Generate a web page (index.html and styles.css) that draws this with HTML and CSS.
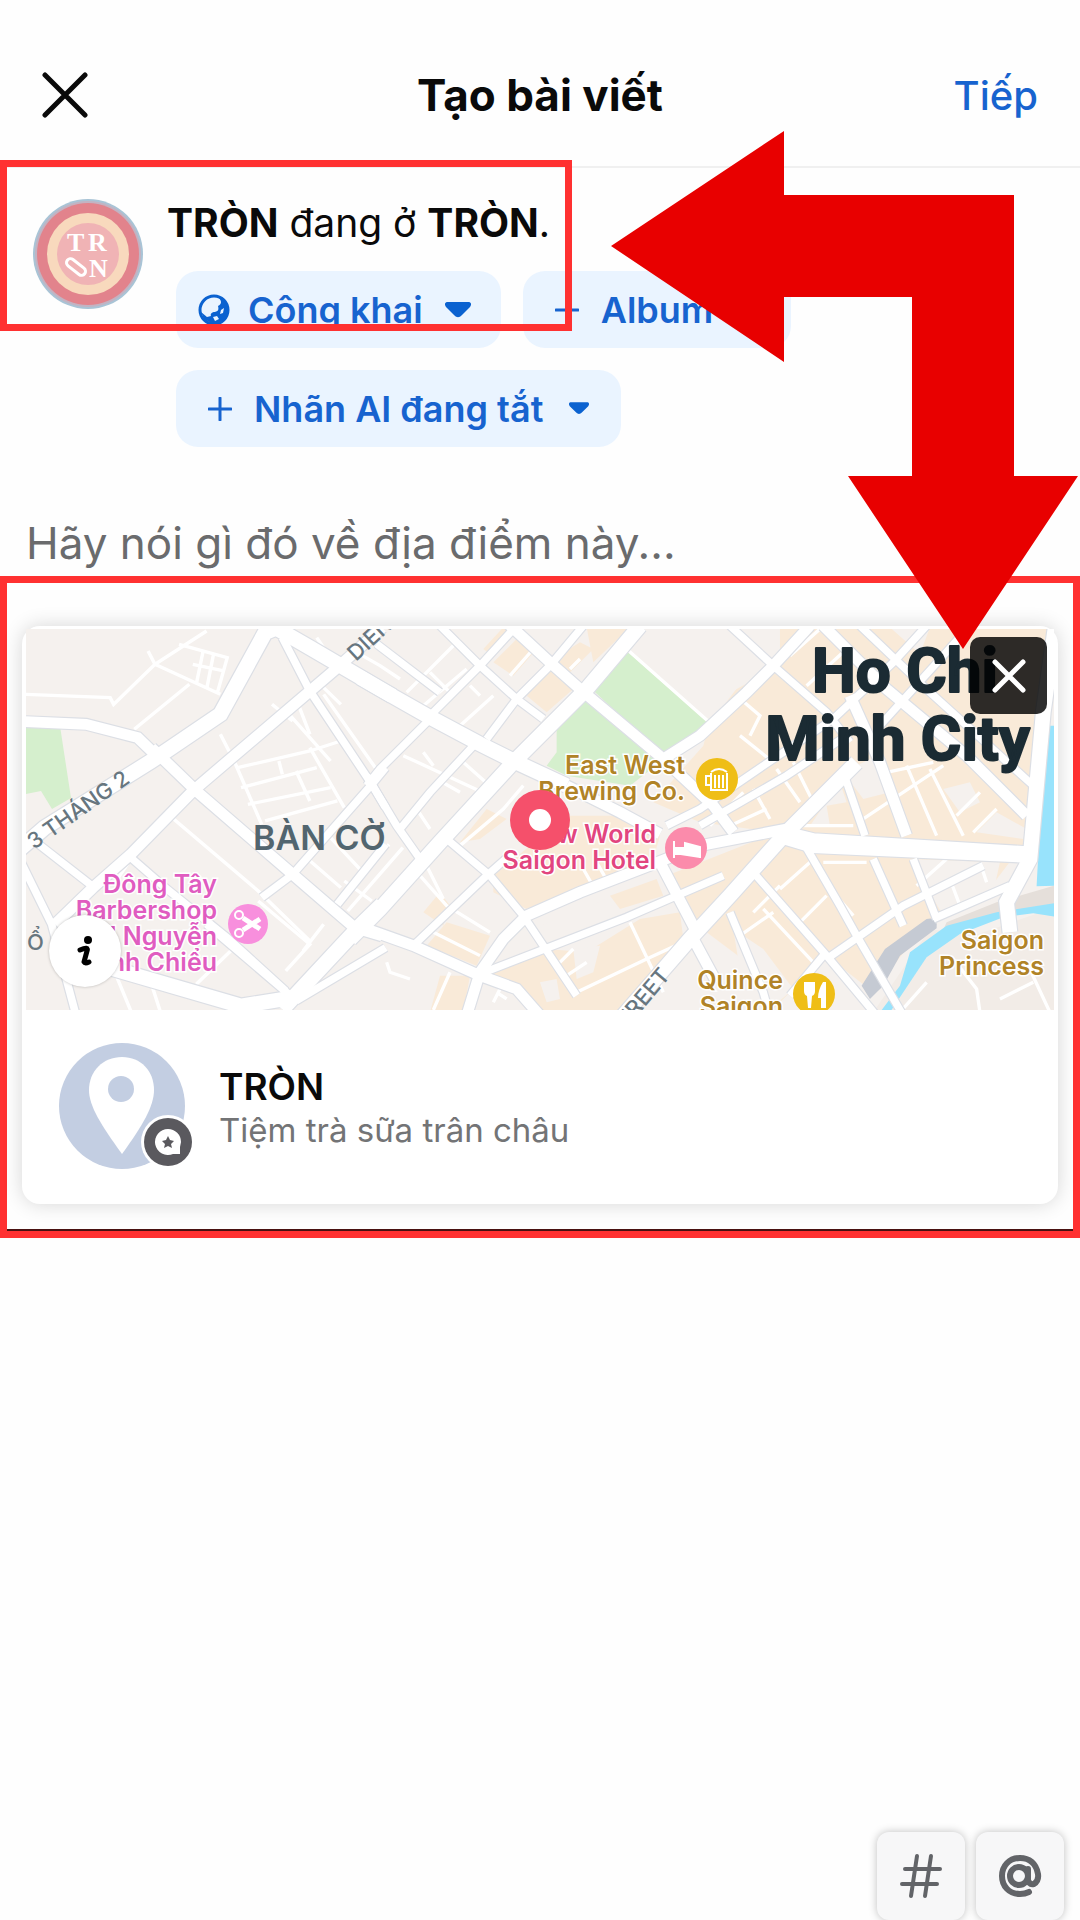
FILE: index.html
```html
<!DOCTYPE html>
<html lang="vi">
<head>
<meta charset="utf-8">
<meta name="viewport" content="width=device-width, initial-scale=1">
<title>Tạo bài viết</title>
<link rel="stylesheet" href="styles.css">
</head>
<body>
<div class="page">
  <header class="topbar">
    <button class="icon-button" type="button" aria-label="Đóng">
      <svg width="46" height="46" viewBox="0 0 46 46"><path d="M3 3 43 43M43 3 3 43" fill="none" stroke="#0a0a0a" stroke-width="5" stroke-linecap="round"/></svg>
    </button>
    <h1 class="title">Tạo bài viết</h1>
    <a class="next" href="#">Tiếp</a>
  </header>

  <main class="composer">
    <section class="author">
      <svg class="avatar" viewBox="0 0 110 110" role="img" aria-label="TRÒN">
        <circle cx="55" cy="55" r="55" fill="#a9c4d6"/>
        <circle cx="55" cy="55" r="53" fill="#c3b3c2"/>
        <circle cx="55" cy="55" r="51" fill="#e2838c"/>
        <circle cx="55" cy="55" r="41" fill="#f8d9bd"/>
        <circle cx="55" cy="55" r="31" fill="#f0b3b5"/>
        <g class="avatar-text"><text x="34" y="52">T</text><text x="55" y="52">R</text><text x="56" y="78">N</text></g>
        <rect x="32" y="64" width="22" height="8" rx="4" transform="rotate(38 43 68)" fill="#f0b3b5" stroke="#fff" stroke-width="3"/>
      </svg>
      <div class="author-info">
        <p class="status"><b>TRÒN</b> đang ở <b>TRÒN</b>.</p>
        <div class="chips">
          <button class="chip chip-public" type="button">
            <svg width="32" height="32" viewBox="0 0 32 32"><circle cx="16" cy="16" r="14" fill="none" stroke="#0b62d0" stroke-width="3"/><path d="M20 3c4 4 4 7 0 9 1 4 0 5-3 6-3 0-5 2-4 4l-4 1-6-5 3 7 9 5 8-1 6-7 1-8-4-8z" fill="#0b62d0"/><path d="m15 23 4-1 2 3-4 2zM22 20l1-4 3-2-1 5z" fill="#eaf4ff"/></svg>
            <span>Công khai</span>
            <svg width="26" height="16" viewBox="0 0 26 16"><path d="M3 0h20c3 0 4 2 2 5l-8 8c-3 3-5 3-8 0L1 5C-1 2 0 0 3 0z" fill="#0b62d0"/></svg>
          </button>
          <button class="chip" type="button">
            <svg width="24" height="24" viewBox="0 0 24 24"><path d="M12 1v22M1 12h22" stroke="#1763cf" stroke-width="3" stroke-linecap="round"/></svg>
            <span>Album</span>
            <svg width="20" height="13" viewBox="0 0 26 16"><path d="M3 0h20c3 0 4 2 2 5l-8 8c-3 3-5 3-8 0L1 5C-1 2 0 0 3 0z" fill="#0b62d0"/></svg>
          </button>
          <button class="chip" type="button">
            <svg width="24" height="24" viewBox="0 0 24 24"><path d="M12 1v22M1 12h22" stroke="#1763cf" stroke-width="3" stroke-linecap="round"/></svg>
            <span>Nhãn AI đang tắt</span>
            <svg width="20" height="13" viewBox="0 0 26 16"><path d="M3 0h20c3 0 4 2 2 5l-8 8c-3 3-5 3-8 0L1 5C-1 2 0 0 3 0z" fill="#0b62d0"/></svg>
          </button>
        </div>
      </div>
    </section>

    <input class="message" type="text" aria-label="Nội dung bài viết" placeholder="Hãy nói gì đó về địa điểm này...">

    <section class="attachment">
      <article class="card">
        <div class="map-wrap">
          <svg class="map" viewBox="26 628 1028 381" role="img" aria-label="Bản đồ">
            <defs>
              <g id="roads-west" transform="matrix(.3443 0 0 .3333 0 560)">
                <path class="wide" d="M40 880 130 800 440 600 640 460 770 215 830 190M800 200 900 260 1140 405M820 1345 1050 1090 1110 1030M300 1215 700 1335 850 1310"/>
                <path class="mid" d="M440 560 570 690 850 940 1030 1100 1110 1125M1110 200 980 320 560 690 380 880 270 980 160 1090M75 482 250 490 400 530 450 580"/>
                <path class="small" d="M820 230 900 390 1080 670 1120 740M1120 620 1080 670 850 940 760 1010M50 880 150 1090 220 1360M100 840 280 985M1120 850 980 1030M860 1320 1120 1160M850 1310 600 1090M380 890 480 980 660 1130 830 1290"/>
              </g>
              <g id="roads-east" transform="translate(380 628) scale(.3333)">
                <path class="wide" d="M-60 145 0 180 150 265 300 345 420 405 560 470M780-10 620 180 400 400 180 640 0 840-90 930M1430 400 1220 610 1050 800 930 930 730 1160M1200 610 1300 635 1960 675M1215 625 1300 650 1960 680M2025 0 1990 250 1950 690 1880 820 1890 910"/>
                <path class="mid" d="M560 470 720 550 840 615M-40 900 100 950 300 1040 410 1080 480 1160M1220 600 960 650 820 705 600 790 440 860 370 930 300 1030 260 1160M380-20 510 100 600 180 850 390 1000 530 1060 610M850 390 960 320 1100 190 1180 110 1290-10M1330-10 1520 180 1760 380 1940 560M840 700 950 910M1410 200 1500 400 1580 620M940 930 1010 1060"/>
                <path class="small" d="M300 1035 740 865 1030 740M200 630 330 740 430 860 590 1100M100 950 320 740 400 670M60 600 150 490 290 340M-40 440 50 590 120 690M140 280 0 420-40 470M-10 45 180 190M160 250 300 110 410-10M320 330 410 210 510 110 610-10M180-10 300 110 410 210 490 270M1050-10 1180 110 1340 250 1410 340M860 590 960 540 1180 390 1360 270 1540 100 1640-10M960 590 1220 440 1400 320M1390 430 1455 620M1270 640 1380 830 1430 920 1570 1160M1480 690 1570 890M1600 690 1670 870M1120 730 1340 980 1490 1160M1050 850 1150 1090 1170 1160M1340 990 1570 830 1810 710M1660 870 1890 770M1330 980 1230 1100M1440-10 1650 190 1960 470M1500 290 1690 80 1770-10"/>
              </g>
            </defs>
            <rect x="26" y="628" width="1028" height="381" fill="#f5f1ee"/>
            <g transform="translate(380 628) scale(.3333)">
              <path fill="#f9ead8" d="M340 100 410 30 470 60 400 140zM440 200 510 120 580 180 500 250zM520 90 600 40 640 60 560 140zM620-5h130L640 100zM310 60l60-65h30l-70 80zM140 950 200 880 330 920 290 1010zM130 850l50-60 30 40-20 60zM180 1040 270 1040 250 1150H150zM340 740 560 560 740 560 840 620 820 690 600 780 440 840 340 790zM690 800 830 750 850 800 720 840zM320 1040 500 960 620 970 780 870 900 850 910 930 720 1150H470l-70-80zM320 540l60 30-80 60-60 10z"/>
              <path fill="#f9ead8" d="M820 520 970 350 1000 240 1070 180 1200 110 1180-5H2020L1950 620 1820 790 1640 880 1480 1090 1340 980 1170 1150 1100 1000 940 880 860 740 1190 610 960 580z"/>
              <path fill="#f5f1ee" d="M760-5h440v100l-120 70-90 120-230-220zM1290 590 1380 460 1400 520 1340 530 1350 590zM1390 430 1490 380 1530 490 1450 510zM1790 610 1850 550 1940 600 1930 630zM1590 690 1860 700 1840 790 1690 860zM1060 900 1150 960 1240 1080 1160 1150 1100 1150zM1690 480l80-20 30 60-60 30zM1530-5h120l-30 80zM980 600l70 10-90 30zM580 960l80-10-20 80-50 20zM480 1060l50-10 10 60-40 10zM480 890l200-80 30 40-180 90z"/>
              <path fill="#d5efcd" d="M635 180 740 65 995 290 900 370 850 380zM500 410 530 370 530 300 615 205 840 400 750 470 560 440z"/>
              <path fill="#f2ece7" d="M1650 900 1780 920 2040 830V1150H1480z"/>
              <path fill="#e5dfda" d="M1700 880 1850 820 2040 765v70l-180 30-180 60z"/>
              <path fill="#98e3fc" d="M1500 1150 1560 1070 1590 970 1700 890 1850 850 2040 820v45l-80-12-90 12-130 50-100 70-60 90-50 75zM2005 290h35v480l-70 2 20-380zM2010 130l30-20v75l-20 5z"/>
              <path fill="#c5cad3" d="M1445 1070 1515 960 1640 870q35-8 30 28L1560 980l-50 90-40 40z"/>
            </g>
            <path fill="#d5efcd" d="M26 725h34l11 72-19 11-11-18-15 3z"/>
            <g class="lanes" transform="matrix(.3443 0 0 .3333 0 560)">
              <path d="M75 400 320 410 330 430 450 310 600 210M430 270 450 310 640 400M520 250 660 290 630 400M590 270 570 370M620 280 600 385M560 310 650 330M390 505 550 370M500 770 750 990 900 1140M680 600 760 790M690 620 900 570 990 540M700 680 920 620M720 730 960 680M770 780 980 720M840 460 960 600M870 440 900 520M900 560 1000 740M860 630 900 720M810 600 820 640"/>
              <path d="M640 520 680 600M940 400 1090 620M940 380 990 430M790 430 850 480M890 890 990 980M960 830 1050 930M1170 860 1010 1050M1130 850 970 1030M750 1020 900 1150 830 1230M940 1090 880 1170M340 1250 380 1350M440 1270 465 1350M690 1150 570 1270M370 910 330 970M1000 960 1080 1020M920 230 960 290"/>
            </g>
            <g class="lanes" transform="translate(380 628) scale(.3333)">
              <path d="M-70 70 0 110 60 150M80 190 240 30M130 230 260 120M390 140 460 60M240 290 340 200M70 380 200 440 330 500M130 370 160 410M170 450 240 490M110 540 150 600M250 400 340 480M240 650 370 540 430 470M120 740 200 830 330 910M130 690 190 810M160 910 300 980M210 1030 160 1143M610 720 650 790M650 700 690 770M750 880 850 1090M590 1090 800 990 930 930M530 1010 580 960M20 1000 30 1030 90 1050M350 1090 380 1110M740 60 1000 290M570 120 600 90M560 1040 620 1000M340 1120 360 1080M150 130 210 190M270 170 300 200"/>
              <path d="M1070 200 1140 260 1110 320M1120 480 1170 570M1190 420 1260 520M1050 590 1160 540M1270 590 1420 590M1450 570 1690 410M1520 430 1660 400M1580 410 1670 620M1650 420 1750 620M1730 560 1800 490M1780 610 1850 540M1330 700 1460 700M1200 780 1290 700M1260 880 1340 800M1360 790 1420 860M1150 840 1300 1000M1120 850 1200 770M1080 920 1180 850M1610 770 1700 690M1710 750 1740 830M1800 700 1820 760M1720 990 1790 1080 1800 1150M1940 1000 2010 1150M1640 1060 1560 1150M1860 1110 1960 1060M1230 80 1320 0M1280 170 1400 60M1240 400 1300 520M1080 320 1180 400M1090 490 990 590"/>
            </g>
            <use href="#roads-west" class="casing"/>
            <use href="#roads-east" class="casing"/>
            <use href="#roads-west" class="surface"/>
            <use href="#roads-east" class="surface"/>
            <g class="street-label">
              <text transform="translate(34 849) rotate(-35)">3 THÁNG 2</text>
              <text transform="translate(356 661) rotate(-43)">DIEN</text>
              <text transform="translate(671 975) rotate(-50)" text-anchor="end">STREET</text>
              <text x="27" y="949">Ổ</text>
            </g>
            <text class="district" x="253" y="849">BÀN CỜ</text>
            <g class="city"><text x="812" y="691">Ho Chi</text><text x="1030" y="759" text-anchor="end">Minh City</text></g>
            <g class="poi food">
              <text x="685" y="773">East West</text><text x="685" y="799">Brewing Co.</text>
              <text x="783" y="988">Quince</text><text x="783" y="1014">Saigon</text>
              <text x="1044" y="948">Saigon</text><text x="1044" y="974">Princess</text>
            </g>
            <g class="poi hotel"><text x="656" y="842">New World</text><text x="656" y="868">Saigon Hotel</text></g>
            <g class="poi salon">
              <text x="217" y="892">Đông Tây</text><text x="217" y="918">Barbershop</text><text x="217" y="944">1 Nguyễn</text><text x="217" y="970">Đình Chiểu</text>
            </g>
            <circle cx="717" cy="778" r="21" fill="#efbe16"/>
            <path d="M711 772v17h16v-17M711 775h-5v9h5M711 771q8-6 16 0M715 774v13M719 774v13M723 774v13" fill="none" stroke="#fff" stroke-width="2"/>
            <circle cx="814" cy="993" r="21" fill="#efbe16"/>
            <path d="M804 981v9q0 4 3 5l1 12h3l1-12q3-1 3-5v-9zM823 981q-5 8-5 16h3v10h5v-26z" fill="#fff"/>
            <circle cx="686" cy="847" r="21" fill="#fb8bab"/>
            <path d="M674 840v17M674 853h26v4M700 853v-7l-15-4v5h-9v6" fill="#fff" stroke="#fff" stroke-width="2"/>
            <circle cx="248" cy="923" r="20" fill="#f88fdd"/>
            <g fill="none" stroke="#fff" stroke-width="2"><circle cx="239" cy="914" r="4"/><circle cx="239" cy="932" r="4"/><path d="m243 917 17 11M243 929l17-11" stroke-width="5"/></g>
            <circle cx="540" cy="819" r="30" fill="#f5506b"/><circle cx="540" cy="819" r="11" fill="#fff"/>
          </svg>
          <button class="map-info" type="button" aria-label="Thông tin bản đồ">
            <svg width="16" height="32" viewBox="0 0 16 32"><circle cx="11" cy="5" r="4" fill="#000"/><path d="M3 15q9-4 7 1L7 27q1 2 5 0" fill="none" stroke="#000" stroke-width="5" stroke-linecap="round" stroke-linejoin="round"/></svg>
          </button>
          <button class="map-remove" type="button" aria-label="Gỡ địa điểm">
            <svg width="34" height="34" viewBox="0 0 34 34"><path d="m3 3 28 28M31 3 3 31" fill="none" stroke="#fff" stroke-width="5" stroke-linecap="round"/></svg>
          </button>
        </div>
        <div class="place">
          <svg class="place-icon" viewBox="0 0 136 126">
            <circle cx="63" cy="63" r="63" fill="#c3cee2"/>
            <path d="M63 14c-19 0-33 14-33 33 0 16 12 35 33 64 21-29 32-48 32-64 0-19-13-33-32-33z" fill="#fff"/>
            <circle cx="62" cy="46" r="13" fill="#c3cee2"/>
            <circle cx="109" cy="99" r="27" fill="#fff"/><circle cx="109" cy="99" r="24" fill="#5a595e"/>
            <path d="M109 86a13 13 0 1 0 5 25h7v-7l1-5a13 13 0 0 0-13-13z" fill="#fff"/>
            <path d="m109 93 2 4 4 1-3 3 1 4-4-2-4 2 1-4-3-3 4-1z" fill="#5a595e"/>
          </svg>
          <div class="place-text">
            <h2 class="place-name">TRÒN</h2>
            <p class="place-kind">Tiệm trà sữa trân châu</p>
          </div>
        </div>
      </article>
    </section>
  </main>

  <footer class="tools">
    <button class="tool" type="button" aria-label="Thêm hashtag">
      <svg width="42" height="46" viewBox="0 0 42 46"><path d="M17 3 11 43M31 3l-6 40M5 16h35M2 31h35" fill="none" stroke="#626468" stroke-width="4" stroke-linecap="round"/></svg>
    </button>
    <button class="tool" type="button" aria-label="Nhắc đến ai đó">
      <svg width="44" height="44" viewBox="0 0 44 44"><g fill="none" stroke="#626468" stroke-width="6" stroke-linecap="round"><circle cx="21" cy="22" r="9"/><path d="M30 15v11q1 5 6 4 5-3 4-10C38 9 31 4 22 4 11 4 4 12 4 22s7 18 18 18q5 0 9-2"/></g></svg>
    </button>
  </footer>

  <div class="highlight"></div>
  <svg class="arrow" viewBox="0 0 468 518"><path d="M0 115 173 0v64h230v281h64L352 518 237 345h64V166H173v65z" fill="#e80000"/></svg>
</div>
</body>
</html>
```
FILE: styles.css
```css
* { box-sizing: border-box; }

body {
  margin: 0;
  background: #fefefe;
  color: #0a0a0a;
  font-family: Inter, "Noto Sans", "Liberation Sans", sans-serif;
}

h1, h2, p { margin: 0; }

button {
  display: flex;
  align-items: center;
  justify-content: center;
  padding: 0;
  border: 0;
  background: none;
  font: inherit;
}

svg { display: block; }

.page {
  position: relative;
  display: flex;
  flex-direction: column;
  min-height: 100vh;
  overflow: hidden;
}

.topbar {
  display: grid;
  grid-template-columns: 1fr auto 1fr;
  align-items: center;
  height: 168px;
  padding: 24px 42px 0;
  border-bottom: 2px solid #f0f0f0;
}

.icon-button { justify-self: start; }

.title {
  font-size: 44px;
  font-weight: 700;
  line-height: 56px;
}

.next {
  justify-self: end;
  color: #1763cf;
  font-size: 40px;
  font-weight: 500;
  text-decoration: none;
}

.author {
  display: flex;
  align-items: flex-start;
  gap: 24px;
  padding: 31px 33px 0;
}

.avatar {
  flex: none;
  width: 110px;
  height: 110px;
}

.avatar-text {
  fill: #fff;
  font: bold 26px "Liberation Serif", serif;
}

.status {
  font-size: 39px;
  line-height: 48px;
}

.status b { font-weight: 700; }

.chips {
  display: flex;
  flex-wrap: wrap;
  gap: 22px;
  max-width: 680px;
  padding: 24px 0 0 9px;
}

.chip {
  height: 77px;
  border-radius: 22px;
  background: #eaf4ff;
  color: #1763cf;
  font-size: 36px;
  font-weight: 600;
  gap: 22px;
  padding: 0 32px;
}

.chip-public { padding: 0 30px 0 22px; gap: 18px; }
.chip svg:last-child { margin-left: 4px; }

.message {
  display: block;
  width: 100%;
  height: 56px;
  margin: 68px 0 5px;
  padding: 0 26px;
  border: 0;
  outline: 0;
  background: none;
  color: #0a0a0a;
  font: 44px Inter, "Noto Sans", sans-serif;
}

.message::placeholder { color: #6a6b6d; opacity: 1; }

.attachment {
  padding: 43px 15px 27px;
  border: 7px solid #ff3131;
  box-shadow: inset 0 -2px #4a1212;
}

.card {
  padding: 3px 4px 0;
  border-radius: 18px;
  background: #fff;
  box-shadow: 0 0 20px rgba(0, 0, 0, .16);
}

.map-wrap { position: relative; }

.map {
  width: 100%;
  height: auto;
}

.lanes {
  fill: none;
  stroke: #fff;
  stroke-width: 10px;
}

.casing {
  --edge: 7px;
  fill: none;
  stroke: #dcdfe5;
}

.surface {
  --edge: 0px;
  fill: none;
  stroke: #fff;
}

.wide { stroke-width: calc(44px + var(--edge)); }
.mid { stroke-width: calc(32px + var(--edge)); }
.small { stroke-width: calc(22px + var(--edge)); }

.street-label {
  fill: #67767f;
  font-size: 22px;
  font-weight: 500;
}

.district {
  fill: #52656f;
  font-size: 34px;
  font-weight: 600;
}

.city {
  fill: #1b2b33;
  stroke: #1b2b33;
  stroke-width: 2px;
  stroke-linejoin: round;
  font: 700 62px Roboto, sans-serif;
}

.poi {
  font-size: 25px;
  font-weight: 600;
  text-anchor: end;
  stroke: #fff;
  stroke-width: 3px;
  paint-order: stroke;
}

.food { fill: #b08327; }
.hotel { fill: #e2457f; }
.salon { fill: #e05cc0; }

.map-info,
.map-remove {
  position: absolute;
}

.map-info {
  left: 23px;
  bottom: 23px;
  width: 72px;
  height: 72px;
  border-radius: 50%;
  background: #fff;
  box-shadow: 0 0 3px rgba(0, 0, 0, .25);
}

.map-remove {
  top: 8px;
  right: 7px;
  width: 77px;
  height: 77px;
  border-radius: 10px;
  background: rgba(0, 0, 0, .82);
}

.place {
  display: flex;
  align-items: center;
  gap: 24px;
  padding: 33px 33px 35px;
}

.place-icon {
  flex: none;
  width: 136px;
  height: 126px;
}

.place-text { padding-top: 4px; }

.place-name {
  font-size: 37px;
  font-weight: 600;
  line-height: 44px;
}

.place-kind {
  color: #737476;
  font-size: 33px;
  line-height: 42px;
}

.tools {
  display: flex;
  justify-content: flex-end;
  gap: 11px;
  margin-top: auto;
  padding: 40px 16px 0;
}

.tool {
  width: 88px;
  height: 88px;
  border-radius: 12px;
  background: #f7f7f8;
  box-shadow: 0 0 8px rgba(0, 0, 0, .25);
}

.highlight {
  position: absolute;
  top: 160px;
  left: 0;
  width: 572px;
  height: 171px;
  border: 7px solid #ff3131;
}

.arrow {
  position: absolute;
  top: 131px;
  right: 1px;
  width: 468px;
  height: 518px;
}
```
